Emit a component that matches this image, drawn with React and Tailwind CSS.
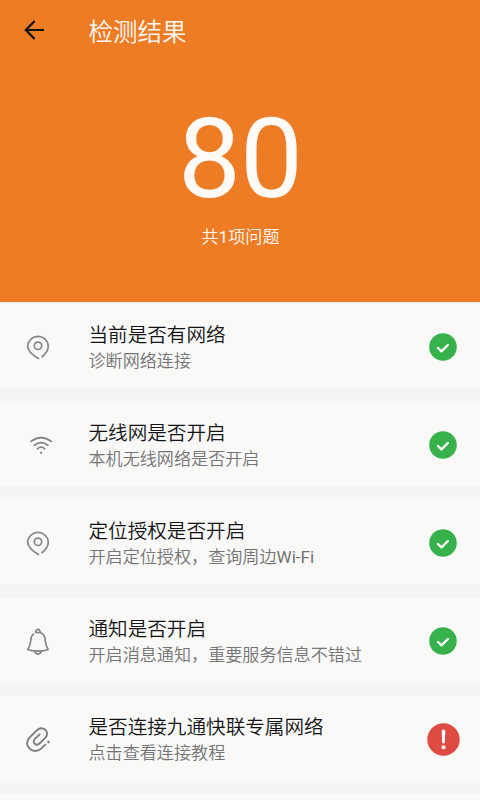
import React from "react";

const PinIcon = () => (
    <svg viewBox="0 0 30 30" className="w-[30px] h-[30px]" fill="none" stroke="#858585" strokeWidth="1.7" strokeLinecap="round">
        <path d="M19 25.7C22.4 23.1 25.3 19.9 25.3 14.8A10.4 10.4 0 0 0 4.6 14.8C4.6 20.1 9.8 24.3 15.5 27.5" />
        <circle cx="15" cy="14.8" r="3.7" />
    </svg>
);

const WifiIcon = () => (
    <svg viewBox="0 0 30 30" className="w-[30px] h-[30px]" fill="none" stroke="#808080" strokeWidth="1.7" strokeLinecap="round">
        <path d="M8 12.4Q18.1 5 28.2 12.4" />
        <path d="M11.3 16.2Q18.1 11.2 24.9 16.2" />
        <path d="M14.4 19.8Q18.1 16.6 21.8 19.8" />
        <circle cx="18.1" cy="23.8" r="1.1" fill="#808080" stroke="none" />
    </svg>
);

const BellIcon = () => (
    <svg viewBox="0 0 30 30" className="w-[30px] h-[30px]" fill="none" stroke="#808080" strokeWidth="1.6" strokeLinecap="round" strokeLinejoin="round">
        <path d="M12.9 7.2C12.7 3.4 17.3 3.4 17.1 7.2" />
        <path d="M12.9 7.5H17.1C20.8 8.6 22.2 12 22.3 16C22.4 19.5 22.8 20.6 25.2 24.4C22.6 25.6 19 26.1 15 26.1C11 26.1 7.4 25.6 4.8 24.4C7.2 20.6 7.6 19.5 7.7 16C7.8 12.6 8.7 10.4 10.4 9" />
        <path d="M11.8 26.4C12.6 30 17.4 30 18.2 26.4" />
    </svg>
);

const ClipIcon = () => (
    <svg viewBox="0 0 30 30" className="w-[30px] h-[30px]" fill="none" stroke="#7d7d7d" strokeWidth="1.9" strokeLinecap="round">
        <path d="M22.3 21.6L18.4 25.4C11.4 31.8 1 24.8 5.2 16.6C5.8 15.5 6.5 14.6 7.4 13.7L13.8 7.4C19.4 2.2 27 8.2 22.8 14.1L16.8 20.3C13.3 23.7 8.6 19.6 11.8 16.2L16.6 11.4" />
        <circle cx="25.5" cy="19.1" r="1.3" fill="#7d7d7d" stroke="none" />
    </svg>
);

const OkBadge = () => (
    <svg viewBox="0 0 28 28" className="w-7 h-7">
        <circle cx="14" cy="14" r="13.8" fill="#37b14b" />
        <path d="M9 15L12.5 18.4L18.9 12" fill="none" stroke="#fff" strokeWidth="2.3" strokeLinecap="round" strokeLinejoin="round" />
    </svg>
);

const ErrorBadge = () => (
    <svg viewBox="0 0 33 33" className="w-[33px] h-[33px]">
        <circle cx="16.5" cy="16.5" r="16.2" fill="#df4b43" />
        <path d="M14.7 8.4A1.8 1.8 0 0 1 18.3 8.4L17.8 19.2A1.3 1.3 0 0 1 15.2 19.2Z" fill="#fff" />
        <circle cx="16.5" cy="24.3" r="2" fill="#fff" />
    </svg>
);

const checks = [
    { icon: PinIcon, title: "当前是否有网络", desc: "诊断网络连接", ok: true },
    { icon: WifiIcon, title: "无线网是否开启", desc: "本机无线网络是否开启", ok: true },
    { icon: PinIcon, title: "定位授权是否开启", desc: <>开启定位授权，查询周边<span className="font-normal">Wi-Fi</span></>, ok: true },
    { icon: BellIcon, title: "通知是否开启", desc: "开启消息通知，重要服务信息不错过", ok: true },
    { icon: ClipIcon, title: "是否连接九通快联专属网络", desc: "点击查看连接教程", ok: false },
];

const CheckRow = ({ icon: Icon, title, desc, ok }) => (
    <li className="flex items-center h-[85px] shrink-0 pl-[23px] bg-[#f9f9f8]">
        <Icon />
        <div className="flex-1 pl-[35.5px] pt-[5px] whitespace-nowrap">
            <h2 className="text-[19.6px] leading-[26px] font-[350] text-[#141414]">{title}</h2>
            <p className="text-[17.1px] leading-[25px] font-[350] text-[#747474]">{desc}</p>
        </div>
        {/* Status */}
        <div className="w-[74px] pt-0.5 flex justify-center">
            {ok ? <OkBadge /> : <ErrorBadge />}
        </div>
    </li>
);

const App = () => {
    return (
        <div className="w-full h-[800px] overflow-hidden flex flex-col bg-[#f5f4f3] font-[Roboto,'Noto_Sans_CJK_SC',sans-serif]">
            <header className="h-[302px] shrink-0 bg-[#ed7c24] text-[#fffaf5]">
                {/* Top bar */}
                <div className="flex items-center h-[60px] pl-6">
                    <svg viewBox="0 0 20 20" className="w-5 h-5" fill="none" stroke="#111" strokeWidth="2.2">
                        <path d="M10.6 1L1.8 10L10.6 19M1.8 10H20" />
                    </svg>
                    <h1 className="pt-[5px] pl-[44.5px] text-[24.5px] leading-9 font-[350]">检测结果</h1>
                </div>

                {/* Score */}
                <div className="flex flex-col items-center">
                    <span className="mt-[39px] text-[112px] leading-[120px] tracking-[-1px]">80</span>
                    <span className="mt-[6px] pl-px text-[17.1px] leading-6 font-[350]">
                        共<span className="font-normal">1</span>项问题
                    </span>
                </div>
            </header>

            <ul className="flex flex-col gap-[13.2px] pt-px">
                {checks.map((item) => (
                    <CheckRow key={item.title} {...item} />
                ))}
                <li className="h-5 shrink-0 bg-[#f9f9f8]"></li>
            </ul>
        </div>
    );
};

export default App;
